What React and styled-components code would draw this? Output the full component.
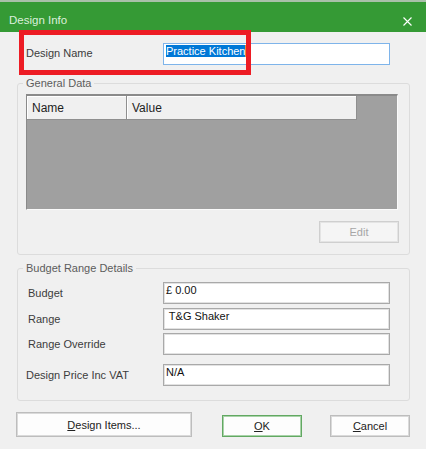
import React from "react";
import styled, { createGlobalStyle } from "styled-components";

const Global = createGlobalStyle`
  html, body { margin: 0; padding: 0; background: #f0f0f0; }
  body { font-family: "Liberation Sans", Arial, sans-serif; }
  * { box-sizing: border-box; }
`;

const Window = styled.div`
  position: relative;
  width: 426px;
  height: 449px;
  background: #f0f0f0;
  display: flex;
  flex-direction: column;
  font-size: 11px;
  color: #333;
  overflow: hidden;
`;

const TitleBar = styled.div`
  height: 32px;
  border-top: 2px solid #a9c0a9;
  background: #359a35;
  display: flex;
  align-items: center;
  justify-content: space-between;
  padding: 5px 14px 0 9px;
`;

const Title = styled.span`
  font-size: 11.5px;
  color: #dcefdc;
  line-height: 14px;
`;

const CloseIcon = styled.svg`
  width: 9px;
  height: 9px;
  margin-top: 3px;
`;

const Body = styled.div`
  display: flex;
  flex-direction: column;
  padding: 11px 16px 0 17px;
`;

const NameRow = styled.div`
  display: grid;
  grid-template-columns: 137px 227px;
  align-items: start;
  padding-left: 9px;
`;

const Label = styled.span`
  font-size: 11px;
  line-height: 14px;
  color: #3c3c3c;
  padding-top: ${(p) => p.$top || 0}px;
  padding-left: ${(p) => p.$indent || 0}px;
`;

const Field = styled.div`
  height: 22px;
  width: 227px;
  background: #fff;
  border: 1px solid ${(p) => (p.$focus ? "#7eb4ea" : "#a9a9a9")};
  box-shadow: ${(p) => (p.$focus ? "none" : "inset 0 0 0 1px #e2e2e2")};
  padding: 1px 2px;
  font-size: 11px;
  line-height: 13px;
  color: #111;
  white-space: pre;
`;

const Selected = styled.span`
  background: #0078d7;
  color: #fff;
  border-right: 1px solid #e69138;
`;

const Group = styled.fieldset`
  margin: ${(p) => p.$mt}px 0 0 0;
  padding: 0 11px ${(p) => p.$pb}px 8px;
  border: 1px solid #dcdcdc;
  border-radius: 3px;
  min-width: 0;
`;

const Legend = styled.legend`
  font-size: 11px;
  line-height: 14px;
  color: #5c5c5c;
  padding: 0 3px;
  margin-left: -3px;
`;

const GridView = styled.div`
  margin-top: 4px;
  height: 116px;
  background: #a0a0a0;
  border-top: 2px solid #8a8a8a;
  border-left: 1px solid #8a8a8a;
  border-right: 1px solid #fafafa;
  border-bottom: 1px solid #fafafa;
  display: flex;
  align-items: flex-start;
`;

const HeaderCell = styled.div`
  width: ${(p) => p.$w}px;
  height: 24px;
  background: #f0f0f0;
  border-right: 1px solid #8f8f8f;
  border-bottom: 1px solid #8f8f8f;
  box-shadow: inset 1px 1px 0 #ffffff;
  padding-left: 5px;
  display: flex;
  align-items: center;
  font-size: 12px;
  color: #1e1e1e;
`;

const EditRow = styled.div`
  display: flex;
  justify-content: flex-end;
  margin-top: 11px;
  margin-right: -1px;
`;

const Button = styled.button`
  width: ${(p) => p.$w || 80}px;
  height: ${(p) => p.$h || 22}px;
  margin: 0;
  padding: 0;
  font-family: "Liberation Sans", Arial, sans-serif;
  font-size: 11px;
  color: ${(p) => (p.disabled ? "#a6a6a6" : "#222")};
  background: ${(p) => (p.disabled ? "#f5f5f5" : "#fdfdfd")};
  border: 1px solid ${(p) => (p.$default ? "#62a862" : p.disabled ? "#cfcfcf" : "#bdbdbd")};
  box-shadow: inset 0 0 0 1px ${(p) => (p.$default ? "#a9d3a9" : p.disabled ? "#e4e4e4" : "#dadada")};
  border-radius: 0;
  cursor: default;
  u { text-decoration: underline; }
`;

const Rows = styled.div`
  display: flex;
  flex-direction: column;
`;

const Row = styled.div`
  display: grid;
  grid-template-columns: 137px 227px;
  align-items: center;
  margin-top: ${(p) => p.$mt}px;
`;

const ButtonBar = styled.div`
  display: flex;
  align-items: flex-end;
  margin-top: 11px;
  margin-left: -1px;
`;

const Spacer = styled.div`
  width: ${(p) => p.$w}px;
`;

const Highlight = styled.div`
  position: absolute;
  left: 19px;
  top: 30px;
  width: 232px;
  height: 45px;
  border: 5px solid #ed1c24;
  pointer-events: none;
`;

const rows = [
  { label: "Budget", value: "£ 0.00", mt: 7, indent: 2 },
  { label: "Range", value: " T&G Shaker", mt: 4, indent: 2 },
  { label: "Range Override", value: "", mt: 3, indent: 2 },
  { label: "Design Price Inc VAT", value: "N/A", mt: 9, indent: 0 },
];

export default function App() {
  return (
    <>
      <Global />
      <Window>
        <TitleBar>
          <Title>Design Info</Title>
          <CloseIcon viewBox="0 0 9 9">
            <path d="M0.5 0.5 L8.5 8.5 M8.5 0.5 L0.5 8.5" stroke="#ffffff" strokeWidth="1.1" fill="none" />
          </CloseIcon>
        </TitleBar>
        <Body>
          <NameRow>
            <Label $top={3}>Design Name</Label>
            <Field $focus>
              <Selected>Practice Kitchen</Selected>
            </Field>
          </NameRow>

          <Group $mt={11} $pb={11}>
            <Legend>General Data</Legend>
            <GridView>
              <HeaderCell $w={100}>Name</HeaderCell>
              <HeaderCell $w={230}>Value</HeaderCell>
            </GridView>
            <EditRow>
              <Button disabled>Edit</Button>
            </EditRow>
          </Group>

          <Group $mt={6} $pb={14}>
            <Legend>Budget Range Details</Legend>
            <Rows>
              {rows.map((r) => (
                <Row key={r.label} $mt={r.mt}>
                  <Label $indent={r.indent}>{r.label}</Label>
                  <Field>{r.value}</Field>
                </Row>
              ))}
            </Rows>
          </Group>

          <ButtonBar>
            <Button $w={176} $h={25}>
              <u>D</u>esign Items...
            </Button>
            <Spacer $w={30} />
            <Button $default>
              <u>O</u>K
            </Button>
            <Spacer $w={28} />
            <Button>
              <u>C</u>ancel
            </Button>
          </ButtonBar>
        </Body>
        <Highlight />
      </Window>
    </>
  );
}
